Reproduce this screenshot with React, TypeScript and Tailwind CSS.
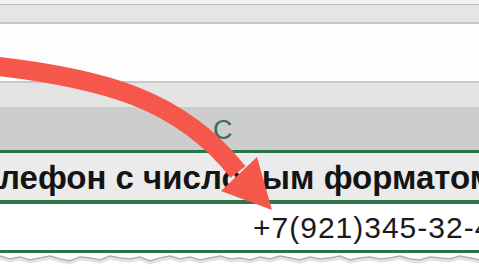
import React from "react";

const torn = (() => {
  const pts: string[] = [];
  const ys = [3, 6, 4, 7, 5, 3, 6, 8, 4, 5, 7, 3, 5, 6, 4, 8, 5, 3, 6, 4, 7, 5, 3, 6, 5, 7, 4, 6, 3, 5, 7, 4, 6, 5, 3, 7, 5, 4, 6, 5, 3, 6, 7, 4, 5, 6, 3, 5, 7, 4];
  for (let i = 0; i < ys.length; i++) {
    pts.push(`${i * 10},${ys[i]}`);
  }
  return pts.join(" ");
})();

export default function App() {
  return (
    <div className="relative w-[479px] h-[269px] overflow-hidden bg-white flex flex-col" style={{ fontFamily: '"Liberation Sans", Arial, sans-serif' }}>
      <div className="h-[4px] bg-[#f2f2f2]" />
      <div className="h-[1px] bg-[#b9b9b9]" />
      <div className="h-[17px] bg-[#e5e5e5]" />
      <div className="h-[2px] bg-[#c6c6c6]" />
      <div className="h-[57px] bg-[#fdfdfd]" />
      <div className="h-[2px] bg-[#c8c8c8]" />
      <div className="h-[24px] bg-[#e4e4e4]" />
      <div className="h-[43px] bg-[#cdcdcd] flex items-center pl-[213px] pt-[3px]">
        <span className="text-[27px] leading-none text-[#3d6b56]">C</span>
      </div>
      <div className="h-[3px] bg-[#2b7449]" />
      <div className="h-[47px] bg-[#ebebeb] flex items-end overflow-hidden whitespace-nowrap pb-[6px]">
        <span className="text-[33px] leading-none font-bold text-[#141414] -ml-[1px]">лефон с числовым форматом</span>
      </div>
      <div className="h-[4px] bg-[#2b7449]" />
      <div className="h-[46px] bg-white flex items-center overflow-hidden whitespace-nowrap pl-[253px] pt-[2px]">
        <span className="text-[30px] leading-none tracking-[1px] text-[#1a1a1a]">+7(921)345-32-4</span>
      </div>
      <div className="h-[3px] bg-[#2b7449]" />
      <div className="h-[16px] relative bg-white">
        <svg width="479" height="16" className="absolute left-0 top-0">
          <polygon points={`0,0 479,0 479,${5} ${torn} 0,4`} fill="#ffffff" />
          <polyline points={torn} fill="none" stroke="#a9a9a9" strokeWidth="1.5" />
          <polyline points={torn} fill="none" stroke="#d6d6d6" strokeWidth="3" transform="translate(0,2)" opacity="0.7" />
        </svg>
      </div>
      <svg width="479" height="269" className="absolute left-0 top-0 pointer-events-none">
        <path d="M -5 66 C 100 78, 180 98, 238 172" fill="none" stroke="#f6574b" strokeWidth="19" />
        <polygon points="257,157 272,210 221,191" fill="#f6574b" />
      </svg>
    </div>
  );
}
